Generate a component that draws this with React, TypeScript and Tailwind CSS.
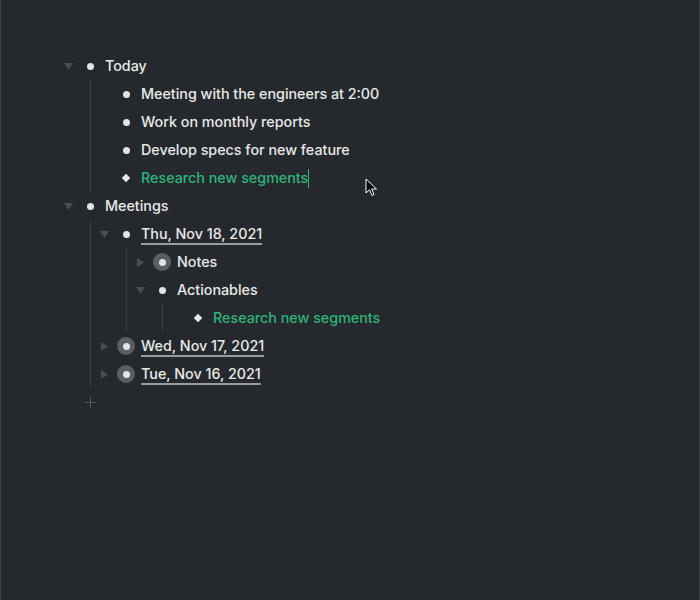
import React from "react";

type Node = {
  text: string;
  kind?: "dot" | "halo" | "diamond";
  arrow?: "down" | "right";
  green?: boolean;
  underline?: boolean;
  caret?: boolean;
  children?: Node[];
};

const data: Node[] = [
  {
    text: "Today",
    arrow: "down",
    children: [
      { text: "Meeting with the engineers at 2:00" },
      { text: "Work on monthly reports" },
      { text: "Develop specs for new feature" },
      { text: "Research new segments", kind: "diamond", green: true, caret: true },
    ],
  },
  {
    text: "Meetings",
    arrow: "down",
    children: [
      {
        text: "Thu, Nov 18, 2021",
        arrow: "down",
        underline: true,
        children: [
          { text: "Notes", arrow: "right", kind: "halo" },
          {
            text: "Actionables",
            arrow: "down",
            children: [{ text: "Research new segments", kind: "diamond", green: true }],
          },
        ],
      },
      { text: "Wed, Nov 17, 2021", arrow: "right", kind: "halo", underline: true },
      { text: "Tue, Nov 16, 2021", arrow: "right", kind: "halo", underline: true },
    ],
  },
];

function Arrow({ dir }: { dir?: "down" | "right" }) {
  if (!dir) return <span className="w-4" />;
  return (
    <span className="w-4 flex items-center justify-center">
      {dir === "down" ? (
        <svg width="9" height="7" viewBox="0 0 9 7">
          <path d="M0 0 H9 L4.5 7 Z" fill="#4a4e52" />
        </svg>
      ) : (
        <svg width="7" height="9" viewBox="0 0 7 9">
          <path d="M0 0 V9 L7 4.5 Z" fill="#4a4e52" />
        </svg>
      )}
    </span>
  );
}

function Bullet({ kind }: { kind?: "dot" | "halo" | "diamond" }) {
  return (
    <span className="w-5 flex items-center justify-center">
      {kind === "halo" ? (
        <span className="w-[18px] h-[18px] rounded-full bg-[#5b5e62] flex items-center justify-center">
          <span className="w-[7px] h-[7px] rounded-full bg-[#e4e4e4]" />
        </span>
      ) : kind === "diamond" ? (
        <span className="w-[6px] h-[6px] rotate-45 bg-[#e8e8e8]" />
      ) : (
        <span className="w-[7px] h-[7px] rounded-full bg-[#e4e4e4]" />
      )}
    </span>
  );
}

function Item({ node }: { node: Node }) {
  return (
    <div>
      <div className="h-[28px] flex items-center">
        <Arrow dir={node.arrow} />
        <span className="w-1" />
        <Bullet kind={node.kind} />
        <span
          className={
            "ml-[5px] text-[14.3px] font-medium leading-[20px] whitespace-nowrap flex items-center " +
            (node.green ? "text-[#2fb47a]" : "text-[#e9e9e9]")
          }
        >
          <span
            className={
              node.underline
                ? "underline decoration-[#9a9da0] decoration-[1.5px] underline-offset-[4px]"
                : ""
            }
          >
            {node.text}
          </span>
          {node.caret && <span className="inline-block w-px h-[19px] bg-[#2fb47a]" />}
        </span>
      </div>
      {node.children && (
        <div className="ml-[30px] border-l border-[#3a3e42] pl-[5px]">
          {node.children.map((c, i) => (
            <Item key={i} node={c} />
          ))}
        </div>
      )}
    </div>
  );
}

export default function App() {
  return (
    <div
      className="relative w-[700px] h-[600px] bg-[#25292d] border-l border-r border-[#3c3f42] overflow-hidden"
      style={{ fontFamily: "Inter, 'Noto Sans', sans-serif" }}
    >
      <div className="pt-[52px] pl-[59px]">
        {data.map((n, i) => (
          <Item key={i} node={n} />
        ))}
        <div className="h-[28px] flex items-center">
          <span className="w-4" />
          <span className="w-1" />
          <span className="w-5 flex items-center justify-center">
            <svg width="11" height="11" viewBox="0 0 11 11">
              <path d="M5.5 0 V11 M0 5.5 H11" stroke="#55595d" strokeWidth="1" />
            </svg>
          </span>
        </div>
      </div>
      <svg
        className="absolute left-[364px] top-[178px]"
        width="13"
        height="19"
        viewBox="0 0 13 19"
      >
        <path
          d="M1 1 V15 L4.5 11.8 L7 17.5 L9 16.6 L6.7 11 H11.5 Z"
          fill="#000"
          stroke="#fff"
          strokeWidth="1"
          strokeLinejoin="round"
        />
      </svg>
    </div>
  );
}
